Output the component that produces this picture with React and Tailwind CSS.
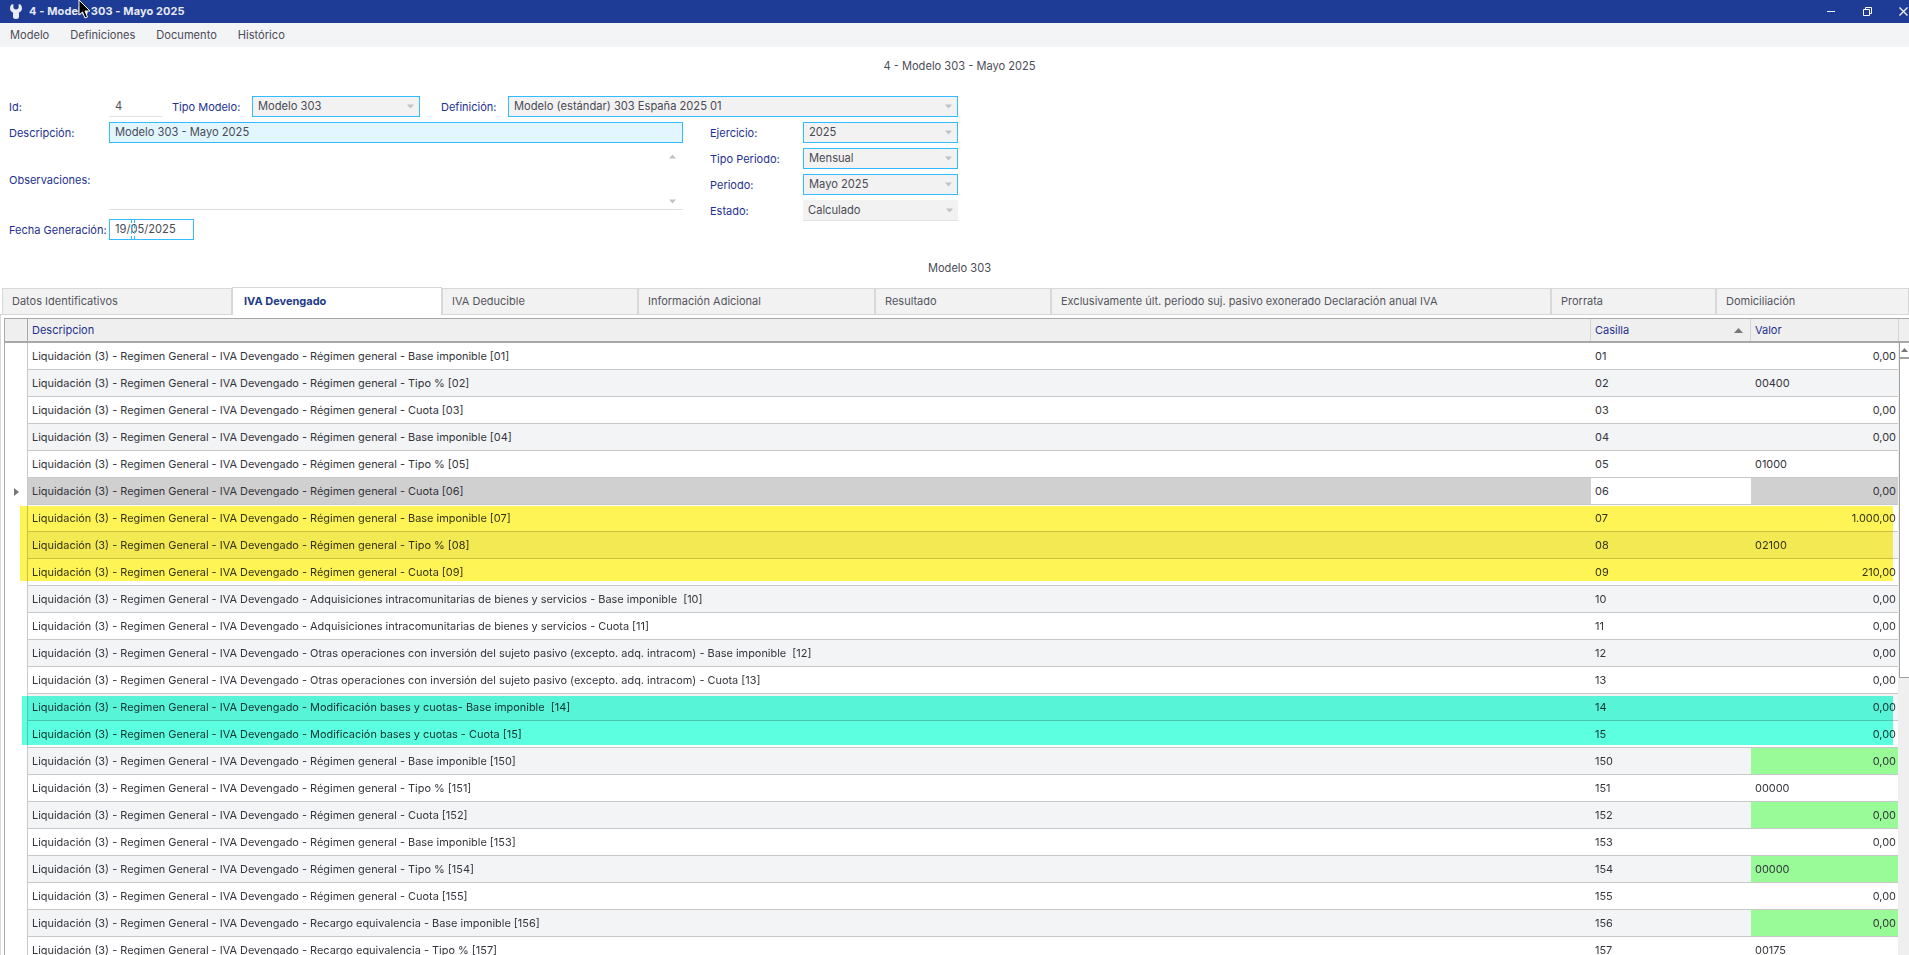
import React from "react";

const G = "Liquidación (3) - Regimen General - IVA Devengado - ";
const R = G + "Régimen general - ";
const rows = [
  [R + "Base imponible [01]", "01", "0,00"],
  [R + "Tipo % [02]", "02", "00400"],
  [R + "Cuota [03]", "03", "0,00"],
  [R + "Base imponible [04]", "04", "0,00"],
  [R + "Tipo % [05]", "05", "01000"],
  [R + "Cuota [06]", "06", "0,00"],
  [R + "Base imponible [07]", "07", "1.000,00"],
  [R + "Tipo % [08]", "08", "02100"],
  [R + "Cuota [09]", "09", "210,00"],
  [G + "Adquisiciones intracomunitarias de bienes y servicios - Base imponible  [10]", "10", "0,00"],
  [G + "Adquisiciones intracomunitarias de bienes y servicios - Cuota [11]", "11", "0,00"],
  [G + "Otras operaciones con inversión del sujeto pasivo (excepto. adq. intracom) - Base imponible  [12]", "12", "0,00"],
  [G + "Otras operaciones con inversión del sujeto pasivo (excepto. adq. intracom) - Cuota [13]", "13", "0,00"],
  [G + "Modificación bases y cuotas- Base imponible  [14]", "14", "0,00"],
  [G + "Modificación bases y cuotas - Cuota [15]", "15", "0,00"],
  [R + "Base imponible [150]", "150", "0,00", true],
  [R + "Tipo % [151]", "151", "00000"],
  [R + "Cuota [152]", "152", "0,00", true],
  [R + "Base imponible [153]", "153", "0,00"],
  [R + "Tipo % [154]", "154", "00000", true],
  [R + "Cuota [155]", "155", "0,00"],
  [G + "Recargo equivalencia - Base imponible [156]", "156", "0,00", true],
  [G + "Recargo equivalencia - Tipo % [157]", "157", "00175"],
];

const tabs = [
  ["Datos Identificativos", "w-[230px]"],
  ["IVA Devengado", "w-[210px]", true],
  ["IVA Deducible", "w-[196px]"],
  ["Información Adicional", "w-[237px]"],
  ["Resultado", "w-[176px]"],
  ["Exclusivamente últ. periodo suj. pasivo exonerado Declaración anual IVA", "w-[500px]"],
  ["Prorrata", "w-[165px]"],
  ["Domiciliación", "flex-1"],
];

function Label({ children, className = "" }) {
  return <span className={`pt-[2px] text-[11px] text-[#24318f] whitespace-nowrap ${className}`}>{children}</span>;
}

function Arrow({ up = false, className = "" }) {
  return (
    <svg width="7" height="5" viewBox="0 0 7 5" className={className}>
      <path d={up ? "M0 4.5 L3.5 0.5 L7 4.5 Z" : "M0 0.5 L7 0.5 L3.5 4.5 Z"} fill="#c2c2c2" />
    </svg>
  );
}

function Combo({ value, className = "", plain = false }) {
  return (
    <div
      className={`h-[21px] flex items-center justify-between pl-[5px] pr-[5px] bg-[#f2f2f2] text-[11.15px] text-[#4a4a55] ${
        plain ? "border-b border-[#e2e2e2]" : "border border-[#33bbff]"
      } ${className}`}
    >
      <span>{value}</span>
      <Arrow />
    </div>
  );
}

function Row({ row, index }) {
  const [desc, cas, val, green] = row;
  const selected = index === 5;
  const bg = selected ? "bg-[#d0d0d0]" : index % 2 ? "bg-[#f3f4f6]" : "bg-white";
  const numeric = val.includes(",");
  return (
    <div className="flex h-[27px] shrink-0 text-[10.93px] text-[#34353c]">
      <div className="w-[23px] shrink-0 bg-white flex items-center justify-center border-r border-[#c8c8c8]">
        {selected && (
          <svg width="5" height="8" viewBox="0 0 5 8">
            <path d="M0 0 L5 4 L0 8 Z" fill="#777777" />
          </svg>
        )}
      </div>
      <div className={`flex flex-1 border-b border-[#c8c8c8] ${bg}`}>
        <div className="w-[1563px] shrink-0 pl-[4px] flex items-center whitespace-pre">{desc}</div>
        <div className={`w-[160px] shrink-0 pl-[4px] flex items-center ${selected ? "bg-white" : ""}`}>{cas}</div>
        <div
          className={`flex-1 flex items-center pl-[4px] pr-[2px] ${numeric ? "justify-end" : ""} ${
            green ? "bg-[#98fb98]" : ""
          }`}
        >
          {val}
        </div>
      </div>
    </div>
  );
}

function Band({ className }) {
  return <div className={`absolute right-[5px] mix-blend-multiply pointer-events-none ${className}`} />;
}

export default function App() {
  return (
    <div className="relative w-full h-screen overflow-hidden bg-white font-['Inter',sans-serif] flex flex-col">
      {/* Title bar */}
      <div className="h-[23px] shrink-0 bg-[#1e3b95] flex items-center text-white">
        <svg width="12" height="15" viewBox="0 0 12 15" className="ml-[10px]">
          <path
            d="M2 0.3 C0.6 1.2 0 2.8 0 4.5 C0 6.5 1.5 7.9 3 8.5 L3 13 C3 14.2 3.9 15 6 15 C8.1 15 9 14.2 9 13 L9 8.5 C10.5 7.9 12 6.5 12 4.5 C12 2.8 11.4 1.2 10 0.3 L8.6 0.3 L8.6 3.6 C8.6 4.8 7.4 5.4 6 5.4 C4.6 5.4 3.4 4.8 3.4 3.6 L3.4 0.3 Z"
            fill="#e8ebf3"
          />
        </svg>
        <span className="ml-[7px] text-[11px] font-bold tracking-[0.1px] text-[#e6eaf4]">4 - Modelo 303 - Mayo 2025</span>
        <div className="ml-auto flex items-center">
          <div className="w-[8px] h-[1px] bg-white mr-[28px]" />
          <svg width="9" height="9" viewBox="0 0 9 9" className="mr-[27px]">
            <path d="M0.5 2.5 H6.5 V8.5 H0.5 Z M2.5 2.5 V0.5 H8.5 V6.5 H6.5" fill="none" stroke="white" />
          </svg>
          <svg width="9" height="9" viewBox="0 0 9 9" className="mr-[1px]">
            <path d="M0.5 0.5 L8.5 8.5 M8.5 0.5 L0.5 8.5" stroke="#eef0f7" strokeWidth="1.4" />
          </svg>
        </div>
      </div>

      {/* Menu */}
      <div className="h-[24px] shrink-0 bg-[#f3f4f6] flex items-center pl-[10px] pt-[1px] gap-[21px] text-[11.1px] text-[#4b4b57]">
        <span>Modelo</span>
        <span>Definiciones</span>
        <span>Documento</span>
        <span>Histórico</span>
      </div>

      {/* Form title */}
      <div className="h-[38px] shrink-0 flex items-center justify-center pl-[10px] pt-[1px] text-[11.1px] text-[#4b4b57]">
        4 - Modelo 303 - Mayo 2025
      </div>

      {/* Form */}
      <div className="h-[11px] shrink-0" />
      <div className="flex items-center h-[21px] shrink-0 pl-[9px]">
        <Label className="w-[100px]">Id:</Label>
        <div className="w-[53px] h-[21px] border-b border-[#e0e0e8] pl-[6px] flex items-center text-[11.15px] text-[#4a4a55]">4</div>
        <Label className="ml-[10px] w-[80px]">Tipo Modelo:</Label>
        <Combo value="Modelo 303" className="w-[168px]" />
        <Label className="ml-[21px] w-[67px]">Definición:</Label>
        <Combo value="Modelo (estándar) 303 España 2025 01" className="w-[450px]" />
      </div>
      <div className="flex shrink-0 mt-[5px]">
        <div className="w-[683px] shrink-0 pl-[9px] flex flex-col">
          <div className="flex items-center h-[21px]">
            <Label className="w-[100px]">Descripción:</Label>
            <div className="flex-1 h-[21px] border border-[#33bbff] bg-[#e1f6ff] pl-[5px] flex items-center text-[11.15px] text-[#4a4a55]">
              Modelo 303 - Mayo 2025
            </div>
          </div>
          <div className="flex items-center h-[62px] mt-[5px]">
            <Label className="w-[100px]">Observaciones:</Label>
            <div className="flex-1 h-[62px] border-b border-[#e0e0e8] flex flex-col items-end justify-between pr-[7px] pt-[6px] pb-[5px]">
              <Arrow up />
              <Arrow />
            </div>
          </div>
          <div className="flex items-center h-[21px] mt-[9px]">
            <Label className="w-[100px]">Fecha Generación:</Label>
            <div className="relative w-[85px] h-[21px] border border-[#33bbff] pl-[5px] flex items-center text-[11.15px] text-[#4a4a55]">
              19/05/2025
              <div className="absolute left-[21px] top-0 bottom-0 w-[4px] border-x border-dashed border-[#33bbff]" />
            </div>
          </div>
        </div>
        <div className="ml-[27px] w-[248px] flex flex-col gap-[5px]">
          {[
            ["Ejercicio:", "2025", false],
            ["Tipo Periodo:", "Mensual", false],
            ["Periodo:", "Mayo 2025", false],
            ["Estado:", "Calculado", true],
          ].map(([l, v, p]) => (
            <div key={l} className="flex items-center h-[21px]">
              <Label className="w-[93px]">{l}</Label>
              <Combo value={v} plain={p} className="w-[155px]" />
            </div>
          ))}
        </div>
      </div>

      {/* Section title */}
      <div className="h-[48px] shrink-0 flex items-center justify-center pl-[10px] pt-[9px] text-[11.1px] text-[#4b4b57]">
        Modelo 303
      </div>

      {/* Tabs */}
      <div className="flex h-[27px] shrink-0 pl-[2px] border-b border-[#d8d8d8]">
        {tabs.map(([t, w, active]) => (
          <div
            key={t}
            className={`${w} flex items-center text-[11px] border-t border-x border-[#d8d8d8] ${
              active
                ? "bg-white font-bold text-[#1e3a8a] pl-[11px] -mt-[1px] -mb-[1px]"
                : "bg-[#f2f2f2] text-[#55555f] pl-[9px]"
            }`}
          >
            {t}
          </div>
        ))}
      </div>

      {/* Grid */}
      <div className="flex-1 min-h-0 flex flex-col border-l border-[#d8d8d8] pl-[3px] pt-[3px]">
        <div className="flex-1 min-h-0 flex flex-col border-l border-t border-[#a8a8a8]">
          <div className="flex h-[24px] shrink-0 bg-[#efefef] border-b-2 border-[#a8a8a8] text-[11px] text-[#24318f]">
            <div className="w-[23px] shrink-0 border-r border-[#a8a8a8]" />
            <div className="w-[1563px] shrink-0 pl-[4px] flex items-center border-r border-[#d4d4d4]">Descripcion</div>
            <div className="w-[160px] shrink-0 pl-[4px] pr-[7px] flex items-center justify-between border-r border-[#d4d4d4]">
              Casilla
              <svg width="9" height="5" viewBox="0 0 9 5">
                <path d="M0 5 L4.5 0 L9 5 Z" fill="#777777" />
              </svg>
            </div>
            <div className="w-[148px] shrink-0 pl-[4px] flex items-center border-r border-[#d4d4d4]">Valor</div>
          </div>
          <div className="flex flex-1 min-h-0">
            <div className="w-[1893px] shrink-0 flex flex-col overflow-hidden">
              {rows.slice(0, 6).map((r, i) => (
                <Row key={r[1]} row={r} index={i} />
              ))}
              <div className="relative isolate shrink-0">
                {rows.slice(6, 13).map((r, i) => (
                  <Row key={r[1]} row={r} index={i + 6} />
                ))}
                <Band className="left-[15px] top-[1px] h-[75px] bg-[#fff455]" />
              </div>
              <div className="relative isolate shrink-0">
                {rows.slice(13).map((r, i) => (
                  <Row key={r[1]} row={r} index={i + 13} />
                ))}
                <Band className="left-[17px] top-[2px] h-[49px] bg-[#5cffe0]" />
              </div>
            </div>
            <div className="flex-1 bg-[#efefef]">
              <div className="h-[335px] bg-white border-l border-b border-[#a0a0a0] ml-[1px]">
                <div className="h-[16px] border-b-2 border-[#a0a0a0] flex items-center justify-center pr-[1px]">
                  <svg width="7" height="4" viewBox="0 0 7 4">
                    <path d="M0 4 L3.5 0 L7 4 Z" fill="#777777" />
                  </svg>
                </div>
              </div>
            </div>
          </div>
        </div>
      </div>

      {/* Mouse cursor */}
      <svg width="13" height="20" viewBox="0 0 13 20" className="absolute left-[78px] top-0 pointer-events-none">
        <path d="M1 0 L1 15 L4.5 12 L7 18 L9.5 17 L7 11 L12 11 Z" fill="black" stroke="white" strokeWidth="1" />
      </svg>
    </div>
  );
}
